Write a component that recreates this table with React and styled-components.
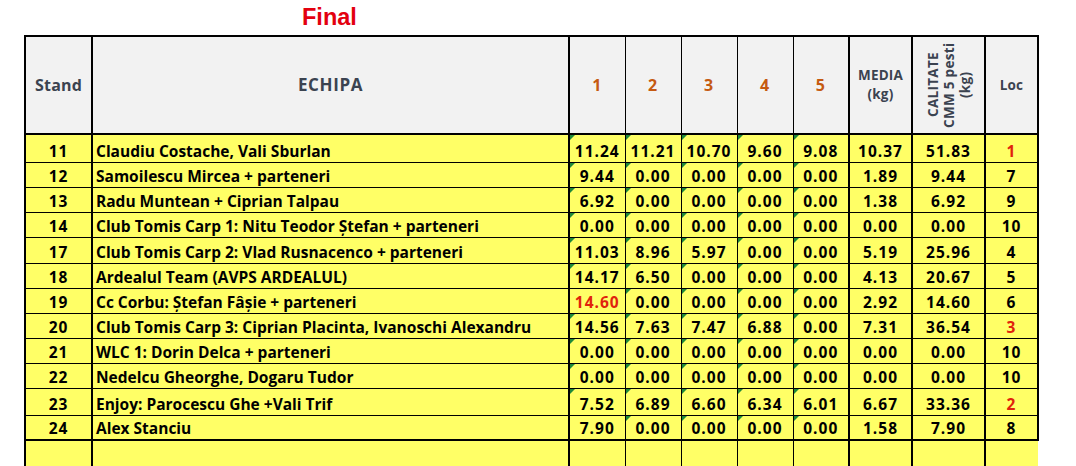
import React from "react";
import styled, { createGlobalStyle, css } from "styled-components";

const Global = createGlobalStyle`
  html, body { margin: 0; padding: 0; background: #fff; overflow: hidden; }
  body { font-family: "Open Sans", "Liberation Sans", sans-serif; }
`;

const Page = styled.div`
  width: 1076px;
  height: 466px;
  padding-left: 24px;
  box-sizing: border-box;
  overflow: hidden;
`;

const TitleBar = styled.div`
  height: 35px;
  display: flex;
  align-items: flex-start;
  padding-left: 278px;
`;

const Title = styled.h1`
  margin: 4px 0 0 0;
  font-family: "Liberation Sans", Arial, sans-serif;
  font-weight: 700;
  font-size: 23.5px;
  color: #e3000f;
  line-height: 26px;
`;

const Table = styled.table`
  border-collapse: collapse;
  table-layout: fixed;
  font-family: "Open Sans", "Liberation Sans", sans-serif;
  font-weight: 700;
`;

const HeadCell = styled.th`
  background: #f2f2f2;
  height: 96px;
  padding: 0;
  border: 1px solid #000;
  border-top: 2px solid #000;
  border-bottom: 2px solid #000;
  ${(p) => p.$thickLeft && css`border-left: 2px solid #000;`}
  ${(p) => p.$thickRight && css`border-right: 2px solid #000;`}
  color: ${(p) => (p.$num ? "#c55a11" : "#3b4350")};
  font-size: ${(p) => (p.$small ? "13.5px" : p.$big ? "17px" : "16px")};
  letter-spacing: ${(p) => (p.$num ? "1px" : p.$big ? "0.6px" : "0.2px")};
  font-weight: 700;
  text-align: center;
  vertical-align: middle;
  line-height: ${(p) => (p.$small ? "19px" : "18px")};
`;

const Vertical = styled.div`
  writing-mode: vertical-rl;
  transform: rotate(180deg);
  margin: 0 auto;
  text-align: center;
  line-height: 16px;
  letter-spacing: 0.3px;
  height: 94px;
`;

const Row = styled.tr`
  height: ${(p) => p.$h}px;
`;

const Cell = styled.td`
  background: #ffff66;
  padding: 0 0 1px 0;
  border: 1px solid #000;
  ${(p) => p.$thickLeft && css`border-left: 2px solid #000;`}
  ${(p) => p.$thickRight && css`border-right: 2px solid #000;`}
  ${(p) => p.$thickBottom && css`border-bottom: 2px solid #000;`}
  ${(p) => p.$open && css`border-bottom: none;`}
  ${(p) => p.$openRight && css`border-right: none; box-shadow: 2px 0 0 #ffff66;`}
  font-size: 15.5px;
  line-height: 20px;
  letter-spacing: ${(p) => (p.$left ? "0" : "1px")};
  color: ${(p) => (p.$red ? "#e0230c" : "#000")};
  text-align: ${(p) => (p.$left ? "left" : "center")};
  ${(p) => p.$left && css`padding-left: 3px;`}
  vertical-align: bottom;
  white-space: nowrap;
  position: relative;
  ${(p) =>
    p.$flag &&
    css`
      &::before {
        content: "";
        position: absolute;
        left: 0;
        top: 0;
        border-top: 5px solid #1e8a3a;
        border-right: 5px solid transparent;
      }
    `}
`;

const rows = [
  ["11", "Claudiu Costache, Vali Sburlan", ["11.24", "11.21", "10.70", "9.60", "9.08"], "10.37", "51.83", "1", true, 28],
  ["12", "Samoilescu Mircea + parteneri", ["9.44", "0.00", "0.00", "0.00", "0.00"], "1.89", "9.44", "7", false, 25],
  ["13", "Radu Muntean + Ciprian Talpau", ["6.92", "0.00", "0.00", "0.00", "0.00"], "1.38", "6.92", "9", false, 25],
  ["14", "Club Tomis Carp 1: Nitu Teodor Ștefan + parteneri", ["0.00", "0.00", "0.00", "0.00", "0.00"], "0.00", "0.00", "10", false, 25],
  ["17", "Club Tomis Carp 2: Vlad Rusnacenco + parteneri", ["11.03", "8.96", "5.97", "0.00", "0.00"], "5.19", "25.96", "4", false, 26],
  ["18", "Ardealul Team (AVPS ARDEALUL)", ["14.17", "6.50", "0.00", "0.00", "0.00"], "4.13", "20.67", "5", false, 25],
  ["19", "Cc Corbu: Ștefan Fâșie + parteneri", ["14.60", "0.00", "0.00", "0.00", "0.00"], "2.92", "14.60", "6", false, 25, true],
  ["20", "Club Tomis Carp 3: Ciprian Placinta, Ivanoschi Alexandru", ["14.56", "7.63", "7.47", "6.88", "0.00"], "7.31", "36.54", "3", true, 25],
  ["21", "WLC 1: Dorin Delca + parteneri", ["0.00", "0.00", "0.00", "0.00", "0.00"], "0.00", "0.00", "10", false, 25],
  ["22", "Nedelcu Gheorghe, Dogaru Tudor", ["0.00", "0.00", "0.00", "0.00", "0.00"], "0.00", "0.00", "10", false, 25],
  ["23", "Enjoy: Parocescu Ghe +Vali Trif", ["7.52", "6.89", "6.60", "6.34", "6.01"], "6.67", "33.36", "2", true, 27],
  ["24", "Alex Stanciu", ["7.90", "0.00", "0.00", "0.00", "0.00"], "1.58", "7.90", "8", false, 25, false, true],
];

const widths = [67, 477, 56, 56, 56, 56, 56, 63, 73, 53];

export default function App() {
  return (
    <Page>
      <Global />
      <TitleBar>
        <Title>Final</Title>
      </TitleBar>
      <Table>
        <colgroup>
          {widths.map((w, i) => (
            <col key={i} style={{ width: w }} />
          ))}
        </colgroup>
        <thead>
          <tr>
            <HeadCell $thickLeft $thickRight>Stand</HeadCell>
            <HeadCell $big $thickRight>ECHIPA</HeadCell>
            {["1", "2", "3", "4", "5"].map((n, i) => (
              <HeadCell key={n} $num $thickRight={i === 4}>{n}</HeadCell>
            ))}
            <HeadCell $small $thickRight>MEDIA<br />(kg)</HeadCell>
            <HeadCell $small $thickRight>
              <Vertical>CALITATE<br />CMM 5 pesti<br />(kg)</Vertical>
            </HeadCell>
            <HeadCell $small $thickRight>Loc</HeadCell>
          </tr>
        </thead>
        <tbody>
          {rows.map(([stand, name, vals, media, cal, loc, red, h, redFirst, last]) => (
            <Row key={stand} $h={h}>
              <Cell $thickLeft $thickRight $thickBottom={last}>{stand}</Cell>
              <Cell $left $thickRight $thickBottom={last}>{name}</Cell>
              {vals.map((v, i) => (
                <Cell
                  key={i}
                  $thickRight={i === 4}
                  $thickBottom={last}
                  $red={redFirst && i === 0}
                  $flag={!((redFirst || last) && i === 0)}
                >
                  {v}
                </Cell>
              ))}
              <Cell $thickRight $thickBottom={last}>{media}</Cell>
              <Cell $thickRight $thickBottom={last}>{cal}</Cell>
              <Cell $thickRight $thickBottom={last} $red={red}>{loc}</Cell>
            </Row>
          ))}
          <Row $h={32}>
            <Cell $thickLeft $thickRight $open />
            <Cell $thickRight $open />
            {[0, 1, 2, 3, 4].map((i) => (
              <Cell key={i} $thickRight={i === 4} $open />
            ))}
            <Cell $thickRight $open />
            <Cell $thickRight $open />
            <Cell $open $openRight />
          </Row>
        </tbody>
      </Table>
    </Page>
  );
}
